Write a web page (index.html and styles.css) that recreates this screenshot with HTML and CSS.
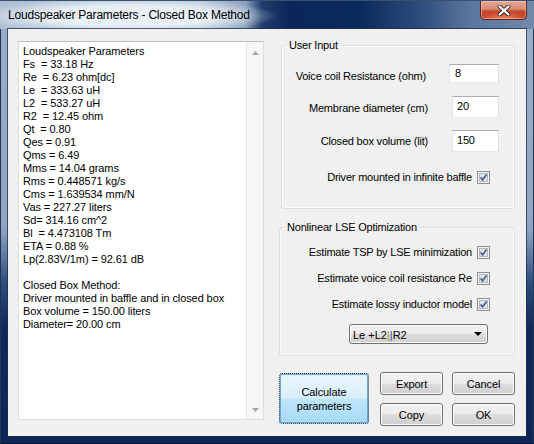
FILE: index.html
```html
<!DOCTYPE html>
<html>
<head>
<meta charset="utf-8">
<title>Loudspeaker Parameters - Closed Box Method</title>
<link rel="stylesheet" href="styles.css">
</head>
<body>
<div class="window">
  <div class="titlebar">
    <span class="title">Loudspeaker Parameters - Closed Box Method</span>
    <div class="close">
      <svg width="14" height="11" viewBox="0 0 14 11"><path d="M2.5 1.5 L11.5 9.5 M11.5 1.5 L2.5 9.5" stroke="#3a2a2a" stroke-width="4" stroke-linecap="round"/><path d="M2.5 1.5 L11.5 9.5 M11.5 1.5 L2.5 9.5" stroke="#ffffff" stroke-width="2.2" stroke-linecap="round"/></svg>
    </div>
  </div>
  <div class="frame">
    <div class="client">
      <div class="results">
        <div class="results-text">Loudspeaker Parameters
Fs  = 33.18 Hz
Re  = 6.23 ohm[dc]
Le  = 333.63 uH
L2  = 533.27 uH
R2  = 12.45 ohm
Qt  = 0.80
Qes = 0.91
Qms = 6.49
Mms = 14.04 grams
Rms = 0.448571 kg/s
Cms = 1.639534 mm/N
Vas = 227.27 liters
Sd= 314.16 cm^2
Bl  = 4.473108 Tm
ETA = 0.88 %
Lp(2.83V/1m) = 92.61 dB

Closed Box Method:
Driver mounted in baffle and in closed box
Box volume = 150.00 liters
Diameter= 20.00 cm</div>
        <div class="scrollbar">
          <div class="sb-btn"><svg width="7" height="4" viewBox="0 0 7 4"><path d="M0 4 L3.5 0 L7 4 Z" fill="#a5a5a5"/></svg></div>
          <div class="sb-btn"><svg width="7" height="4" viewBox="0 0 7 4"><path d="M0 0 L7 0 L3.5 4 Z" fill="#a5a5a5"/></svg></div>
        </div>
      </div>
      <div class="panel">
        <fieldset class="group group-input">
          <legend>User Input</legend>
          <div class="row row1"><span class="lbl">Voice coil Resistance (ohm)</span><span class="tb tb-w50">8</span></div>
          <div class="row row2"><span class="lbl">Membrane diameter (cm)</span><span class="tb tb-w47">20</span></div>
          <div class="row row3"><span class="lbl">Closed box volume (lit)</span><span class="tb tb-w47">150</span></div>
          <div class="row row-check row4"><span class="lbl">Driver mounted in infinite baffle</span><span class="check"><svg width="13" height="13" viewBox="0 0 13 13"><rect x="0.5" y="0.5" width="12" height="12" fill="#f2f2f2" stroke="#8f8f8f"/><rect x="2.5" y="2.5" width="8" height="8" fill="#dfe3e8" stroke="#b4b9c0"/><path d="M3.6 6.4 L5.6 8.8 L9.6 3.4" fill="none" stroke="#4c5f92" stroke-width="1.7"/></svg></span></div>
        </fieldset>
        <fieldset class="group group-lse">
          <legend>Nonlinear LSE Optimization</legend>
          <div class="row row-check rowa"><span class="lbl">Estimate TSP by LSE minimization</span><span class="check"><svg width="13" height="13" viewBox="0 0 13 13"><rect x="0.5" y="0.5" width="12" height="12" fill="#f2f2f2" stroke="#8f8f8f"/><rect x="2.5" y="2.5" width="8" height="8" fill="#dfe3e8" stroke="#b4b9c0"/><path d="M3.6 6.4 L5.6 8.8 L9.6 3.4" fill="none" stroke="#4c5f92" stroke-width="1.7"/></svg></span></div>
          <div class="row row-check rowb"><span class="lbl">Estimate voice coil resistance Re</span><span class="check"><svg width="13" height="13" viewBox="0 0 13 13"><rect x="0.5" y="0.5" width="12" height="12" fill="#f2f2f2" stroke="#8f8f8f"/><rect x="2.5" y="2.5" width="8" height="8" fill="#dfe3e8" stroke="#b4b9c0"/><path d="M3.6 6.4 L5.6 8.8 L9.6 3.4" fill="none" stroke="#4c5f92" stroke-width="1.7"/></svg></span></div>
          <div class="row row-check rowc"><span class="lbl">Estimate lossy inductor model</span><span class="check"><svg width="13" height="13" viewBox="0 0 13 13"><rect x="0.5" y="0.5" width="12" height="12" fill="#f2f2f2" stroke="#8f8f8f"/><rect x="2.5" y="2.5" width="8" height="8" fill="#dfe3e8" stroke="#b4b9c0"/><path d="M3.6 6.4 L5.6 8.8 L9.6 3.4" fill="none" stroke="#4c5f92" stroke-width="1.7"/></svg></span></div>
          <div class="row row-combo">
            <div class="combo"><span class="combo-text">Le +L2<span class="bar1">|</span><span class="bar2">|</span>R2</span><svg width="8" height="4" viewBox="0 0 8 4"><path d="M0 0 L8 0 L4 4 Z" fill="#000"/></svg></div>
          </div>
        </fieldset>
        <div class="buttons">
          <div class="btn btn-calc"><span>Calculate<br>parameters</span></div>
          <div class="btn-col col1">
            <div class="btn">Export</div>
            <div class="btn">Copy</div>
          </div>
          <div class="btn-col col2">
            <div class="btn">Cancel</div>
            <div class="btn">OK</div>
          </div>
        </div>
      </div>
    </div>
  </div>
</div>
</body>
</html>
```

FILE: styles.css
```css
* { box-sizing: border-box; }
html, body { margin: 0; padding: 0; }
body {
  width: 534px;
  height: 444px;
  overflow: hidden;
  font-family: "Liberation Sans", Arial, sans-serif;
  background: #fff;
}
.window {
  width: 534px;
  height: 444px;
  display: flex;
  flex-direction: column;
  background: #0c2656;
}
.titlebar {
  height: 29px;
  flex: none;
  display: flex;
  align-items: flex-start;
  justify-content: space-between;
  padding-left: 8px;
  border-top: 1px solid #3a5070;
  background:
    radial-gradient(ellipse 150px 18px at 128px 15px, rgba(236,242,248,0.95) 55%, rgba(236,242,248,0) 100%),
    linear-gradient(90deg, #aebfd4 0px, #b9c8da 200px, #8ea2bd 245px, #1f3d6d 262px, #0b275a 290px, #0b2a5c 360px, #2d4c7b 420px, #5a769e 470px, #7088aa 534px);
}
.title {
  font-size: 12px;
  letter-spacing: -0.2px;
  line-height: 16px;
  margin-top: 6px;
  color: #000;
}
.close {
  width: 47px;
  height: 19px;
  margin-right: 7px;
  margin-top: 0;
  border: 1px solid #5a2a22;
  border-top: none;
  border-radius: 0 0 5px 5px;
  display: flex;
  align-items: center;
  justify-content: center;
  background:
    radial-gradient(ellipse 22px 7px at 50% 100%, rgba(255,140,100,0.85), rgba(255,140,100,0)),
    linear-gradient(180deg, #e4a797 0%, #d98a73 45%, #c34a2f 55%, #c6442a 100%);
  box-shadow: inset 0 0 0 1px rgba(255,220,210,0.45);
}
.frame {
  flex: 1;
  padding: 0 7px 7px 7px;
  background: linear-gradient(180deg, #9aadc7 0px, #8fa4c0 200px, #2c4b7b 255px, #10295a 300px, #0c2656 100%);
  border-left: 1px solid #1e3558;
  border-right: 1px solid #1e3558;
  border-bottom: 1px solid #0a1a38;
}
.client {
  width: 518px;
  height: 407px;
  background: #f0f0f0;
  display: flex;
  align-items: flex-start;
  padding: 8px 11px 0 10px;
  box-shadow: 0 0 0 1px rgba(30,45,75,0.75);
}
.results {
  width: 246px;
  height: 379px;
  margin-top: 4px;
  display: flex;
  background: #fff;
  border: 1px solid #dadde2;
  border-top-color: #b9bdc4;
}
.results-text {
  flex: 1;
  padding: 3px 0 0 4px;
  font-size: 11px;
  line-height: 13px;
  letter-spacing: -0.1px;
  white-space: pre;
  color: #000;
  overflow: hidden;
}
.scrollbar {
  width: 17px;
  display: flex;
  flex-direction: column;
  justify-content: space-between;
  background: #f6f6f6;
  border-left: 1px solid #e6e6e6;
  padding: 2px 0 1px;
}
.sb-btn {
  height: 17px;
  display: flex;
  align-items: center;
  justify-content: center;
}
.panel {
  margin-left: 15px;
  width: 236px;
  display: flex;
  flex-direction: column;
  font-size: 11px;
  letter-spacing: -0.2px;
  color: #000;
}
.group {
  margin: 0;
  padding: 0;
  min-width: 0;
  border: 1px solid #d5dfe5;
  border-radius: 3px;
  box-shadow: inset 0 0 0 1px #fbfbfb;
}
.group legend {
  margin-left: 5px;
  padding: 0 2px;
  font-size: 11px;
  line-height: 16px;
}
.group-input {
  margin-left: 2px;
  width: 234px;
  padding-bottom: 23px;
}
.group-lse {
  width: 236px;
  margin-top: 10px;
  padding-bottom: 11px;
}
.row {
  display: flex;
  justify-content: flex-end;
  align-items: flex-start;
  line-height: 16px;
}
.lbl { white-space: nowrap; }
.row1 { margin-top: 11px; padding-right: 15px; gap: 23px; }
.row1 .lbl { margin-top: 4px; }
.row2 { margin-top: 12px; padding-right: 15px; gap: 24px; }
.row2 .lbl { margin-top: 4px; }
.row3 { margin-top: 12px; padding-right: 15px; gap: 24px; }
.row3 .lbl { margin-top: 3px; }
.row-check { padding-right: 24px; gap: 5px; height: 16px; }
.row-check .check { margin-top: 2px; width: 13px; height: 13px; display: block; }
.check svg { display: block; }
.row4 { margin-top: 17px; }
.rowa { margin-top: 9px; }
.rowb { margin-top: 10px; }
.rowc { margin-top: 10px; }
.tb {
  display: block;
  background: #fff;
  border: 1px solid;
  border-color: #abadb3 #dbdfe6 #e3e9ef #e2e3ea;
  padding-left: 5px;
  line-height: 15px;
  font-size: 11px;
}
.tb-w50 { width: 50px; height: 19px; padding-top: 1px; }
.tb-w47 { width: 47px; height: 22px; padding-top: 2px; padding-left: 4px; }
.row-combo { margin-top: 12px; padding-right: 26px; }
.combo {
  width: 139px;
  height: 20px;
  border: 1px solid #707070;
  border-radius: 3px;
  background: linear-gradient(180deg, #f2f2f2 0%, #ebebeb 50%, #dddddd 50%, #cfcfcf 100%);
  box-shadow: inset 0 0 0 1px #fcfcfc;
  display: flex;
  align-items: center;
  justify-content: space-between;
  padding: 1px 5px 0 3px;
}
.combo svg { display: block; margin-top: -2px; }
.combo-text { font-size: 11px; letter-spacing: 0; }
.bar1 { color: #c58a10; }
.bar2 { color: #2f4d98; }
.buttons {
  display: flex;
  align-items: flex-start;
  margin-top: 16px;
}
.btn {
  height: 23px;
  border: 1px solid #707070;
  border-radius: 3px;
  background: linear-gradient(180deg, #f2f2f2 0%, #ebebeb 50%, #dddddd 50%, #cfcfcf 100%);
  box-shadow: inset 0 0 0 1px #fcfcfc;
  display: flex;
  align-items: center;
  justify-content: center;
  font-size: 11px;
  letter-spacing: -0.1px;
  color: #000;
}
.btn-calc {
  width: 90px;
  height: 51px;
  margin-top: 1px;
  border: 1px dotted #1c2a36;
  background: linear-gradient(180deg, #eaf6fd 0%, #d9f0fc 48%, #bee6fd 52%, #a7d9f5 100%);
  box-shadow: inset 0 0 0 1px #6aa6d0;
  text-align: center;
  line-height: 14px;
}
.btn-col {
  display: flex;
  flex-direction: column;
  gap: 8px;
  width: 63px;
}
.col1 { margin-left: 11px; }
.col2 { margin-left: 9px; }
```
